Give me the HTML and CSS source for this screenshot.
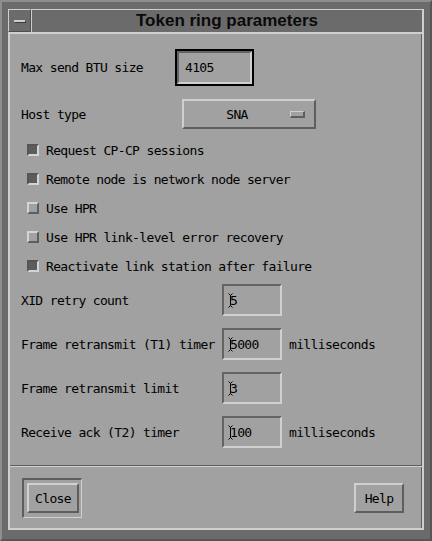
FILE: index.html
```html
<!DOCTYPE html>
<html>
<head>
<meta charset="utf-8">
<link rel="stylesheet" href="styles.css">
</head>
<body>
<div class="window">
  <div class="titlebar">
    <div class="menubtn"><span class="minbar"></span></div>
    <div class="title">Token ring parameters</div>
  </div>
  <div class="client">
    <div class="row row-btu">
      <span class="lw-btu">Max send BTU size</span>
      <div class="defframe"><div class="field">4105</div></div>
    </div>
    <div class="row row-host">
      <span class="lw-host">Host type</span>
      <div class="optmenu"><span class="optlabel">SNA</span><span class="optind"></span></div>
    </div>
    <div class="checks">
      <div class="check"><span class="box on"></span><span>Request CP-CP sessions</span></div>
      <div class="check"><span class="box on"></span><span>Remote node is network node server</span></div>
      <div class="check"><span class="box off"></span><span>Use HPR</span></div>
      <div class="check"><span class="box off"></span><span>Use HPR link-level error recovery</span></div>
      <div class="check"><span class="box on"></span><span>Reactivate link station after failure</span></div>
    </div>
    <div class="fields">
      <div class="row frow"><span class="lw-f">XID retry count</span><div class="field tf"><svg class="ibeam" width="5" height="15" viewBox="0 0 5 15"><path d="M0.5 0.5L2.5 2.5L4.5 0.5M2.5 2.5V12.5M0.5 14.5L2.5 12.5L4.5 14.5" fill="none" stroke="#000" stroke-width="1"/></svg>5</div></div>
      <div class="row frow"><span class="lw-f">Frame retransmit (T1) timer</span><div class="field tf"><svg class="ibeam" width="5" height="15" viewBox="0 0 5 15"><path d="M0.5 0.5L2.5 2.5L4.5 0.5M2.5 2.5V12.5M0.5 14.5L2.5 12.5L4.5 14.5" fill="none" stroke="#000" stroke-width="1"/></svg>5000</div><span class="unit">milliseconds</span></div>
      <div class="row frow"><span class="lw-f">Frame retransmit limit</span><div class="field tf"><svg class="ibeam" width="5" height="15" viewBox="0 0 5 15"><path d="M0.5 0.5L2.5 2.5L4.5 0.5M2.5 2.5V12.5M0.5 14.5L2.5 12.5L4.5 14.5" fill="none" stroke="#000" stroke-width="1"/></svg>3</div></div>
      <div class="row frow"><span class="lw-f">Receive ack (T2) timer</span><div class="field tf"><svg class="ibeam" width="5" height="15" viewBox="0 0 5 15"><path d="M0.5 0.5L2.5 2.5L4.5 0.5M2.5 2.5V12.5M0.5 14.5L2.5 12.5L4.5 14.5" fill="none" stroke="#000" stroke-width="1"/></svg>100</div><span class="unit">milliseconds</span></div>
    </div>
    <div class="sep"></div>
    <div class="buttons">
      <div class="defring"><div class="btn btn-close">Close</div></div>
      <div class="btn btn-help">Help</div>
    </div>
  </div>
</div>
</body>
</html>
```

FILE: styles.css
```css
* { box-sizing: border-box; }
html, body { margin: 0; padding: 0; }
body { width: 432px; height: 541px; background: #6b6b6b; overflow: hidden; }

.window {
  width: 432px; height: 541px;
  border: 2px solid; border-color: #8e8e8e #555 #555 #8e8e8e;
  padding: 7px 6px 9px 6px;
  display: flex; flex-direction: column;
  background: #6b6b6b;
}
.titlebar { display: flex; height: 23px; flex: none; }
.menubtn {
  width: 23px;
  border: 1px solid; border-color: #cfcfcf #4e4e4e #4e4e4e #cfcfcf;
  display: flex; align-items: center; justify-content: center;
}
.minbar { width: 11px; height: 2px; background: #cfcfcf; box-shadow: 1px 1px 0 #3c3c3c; }
.title {
  flex: 1;
  border-top: 1px solid #cfcfcf; border-left: 1px solid #cfcfcf; border-right: 2px solid #cfcfcf;
  display: flex; align-items: center; justify-content: center;
  font: bold 17px "Liberation Sans", Arial, sans-serif; color: #0a0a0a;
}
.client {
  height: 498px; flex: none;
  border: 2px solid #cfcfcf;
  background: #a1a1a1;
  box-shadow: inset -1px 0 0 #5e5e5e;
  display: flex; flex-direction: column;
  font: 13px "DejaVu Sans Mono", monospace; letter-spacing: -0.65px; color: #000;
}
.row { display: flex; align-items: center; padding-left: 11px; white-space: nowrap; }
.row-btu { margin-top: 15px; height: 37px; }
.lw-btu { width: 154px; }
.defframe { width: 79px; height: 37px; border: 2px solid #000; }
.field {
  border: 2px solid; border-color: #646464 #d0d0d0 #d0d0d0 #646464;
  background: #a1a1a1;
  display: flex; align-items: center;
  padding-left: 6px; height: 100%;
}
.row-host { margin-top: 13px; height: 30px; }
.lw-host { width: 161px; }
.optmenu {
  width: 134px; height: 30px;
  border: 2px solid; border-color: #cfcfcf #5e5e5e #5e5e5e #cfcfcf;
  display: flex; align-items: center;
}
.optlabel { flex: 1; text-align: center; }
.optind {
  width: 15px; height: 7px;
  border-style: solid; border-width: 1px 2px 2px 1px;
  border-color: #cfcfcf #5e5e5e #5e5e5e #cfcfcf;
  margin-right: 9px;
}
.checks { margin-top: 13px; display: flex; flex-direction: column; gap: 13px; padding-left: 17px; white-space: nowrap; }
.check { height: 16px; display: flex; align-items: center; }
.box { width: 12px; height: 12px; border: 2px solid; margin-right: 7px; flex: none; }
.box.on { border-color: #555 #d4d4d4 #d4d4d4 #555; background: #5c5c5c; }
.box.off { border-color: #d4d4d4 #5e5e5e #5e5e5e #d4d4d4; background: #a1a1a1; }
.fields { margin-top: 10px; display: flex; flex-direction: column; gap: 12px; }
.frow { height: 32px; }
.lw-f { width: 201px; }
.tf { width: 60px; height: 32px; position: relative; flex: none; }
.ibeam { position: absolute; left: 4px; top: 7px; }
.unit { margin-left: 7px; }
.sep { margin-top: 17px; height: 2px; border-top: 1px solid #5e5e5e; border-bottom: 1px solid #d0d0d0; flex: none; }
.buttons { display: flex; justify-content: space-between; align-items: center; padding: 11px 18px 0 12px; }
.defring {
  width: 60px; height: 40px;
  border-style: solid; border-width: 2px 1px 1px 2px;
  border-color: #5e5e5e #d0d0d0 #d0d0d0 #5e5e5e;
  padding: 3px 2px 4px 3px;
}
.btn {
  color: #000; background: #a1a1a1;
  border: 2px solid; border-color: #d0d0d0 #5e5e5e #5e5e5e #d0d0d0;
  height: 30px;
  display: flex; align-items: center; justify-content: center;
}
.btn-close { width: 52px; }
.btn-help { width: 50px; }
```
